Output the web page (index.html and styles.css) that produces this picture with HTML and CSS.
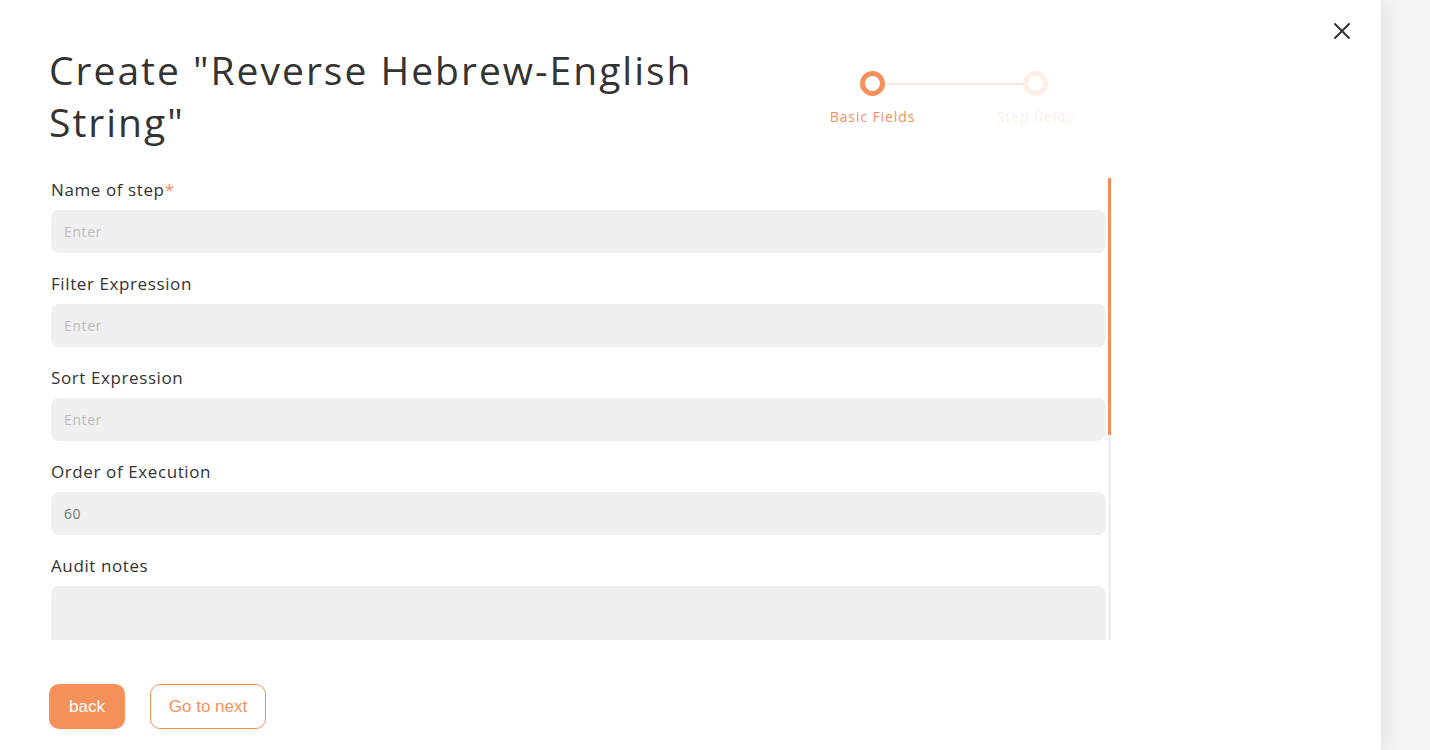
FILE: index.html
```html
<!DOCTYPE html>
<html lang="en">
<head>
<meta charset="utf-8">
<title>Create step</title>
<link rel="stylesheet" href="styles.css">
</head>
<body>
<div class="modal">
  <button class="close" aria-label="Close">
    <svg width="18" height="18" viewBox="0 0 18 18"><path d="M2 2 L16 16 M16 2 L2 16" stroke="#333" stroke-width="2" fill="none" stroke-linecap="round"/></svg>
  </button>
  <div class="header">
    <h1 class="title">Create "Reverse Hebrew-English String"</h1>
    <div class="stepper">
      <div class="step active"><span class="dot"></span><span class="step-label">Basic Fields</span></div>
      <div class="connector"></div>
      <div class="step"><span class="dot"></span><span class="step-label">Step fields</span></div>
    </div>
  </div>
  <div class="form-area">
    <div class="form-scroll">
      <div class="field">
        <label class="label">Name of step<span class="req">*</span></label>
        <input class="input" placeholder="Enter">
      </div>
      <div class="field">
        <label class="label">Filter Expression</label>
        <input class="input" placeholder="Enter">
      </div>
      <div class="field">
        <label class="label">Sort Expression</label>
        <input class="input" placeholder="Enter">
      </div>
      <div class="field">
        <label class="label">Order of Execution</label>
        <input class="input" value="60">
      </div>
      <div class="field">
        <label class="label">Audit notes</label>
        <textarea class="input textarea"></textarea>
      </div>
    </div>
    <div class="scrollbar"><div class="thumb"></div></div>
  </div>
  <div class="actions">
    <button class="btn btn-primary">back</button>
    <button class="btn btn-outline">Go to next</button>
  </div>
</div>
</body>
</html>
```
FILE: styles.css
```css
* { box-sizing: border-box; }
html, body { margin: 0; padding: 0; }
body {
  background: #f5f5f5;
  font-family: "Open Sans", "Noto Sans", sans-serif;
  color: #333;
  width: 1430px;
  height: 750px;
  overflow: hidden;
}
.modal {
  position: relative;
  width: 1381px;
  height: 750px;
  background: #fff;
  box-shadow: 0 0 22px rgba(0,0,0,0.12);
}
.close {
  position: absolute;
  left: 1333px;
  top: 22px;
  width: 18px;
  height: 18px;
  padding: 0;
  border: 0;
  background: none;
  display: flex;
}
.header {
  display: flex;
  align-items: flex-start;
  padding: 44px 0 0 49px;
  height: 178px;
}
.title {
  margin: 0;
  width: 700px;
  font-size: 39px;
  line-height: 52px;
  letter-spacing: 2px;
  font-weight: 400;
  color: #333;
}
.stepper {
  display: flex;
  align-items: flex-start;
  margin: 27px 0 0 111px;
}
.step {
  width: 25px;
  display: flex;
  flex-direction: column;
  align-items: center;
}
.dot {
  width: 25px;
  height: 25px;
  border-radius: 50%;
  border: 5px solid #fdeee6;
  background: #fff;
}
.step.active .dot { border-color: #f4905c; }
.step-label {
  margin-top: 11px;
  white-space: nowrap;
  font-size: 14px;
  line-height: 20px;
  letter-spacing: 0.9px;
  color: #fdeee6;
}
.step.active .step-label { color: #f4905c; }
.connector {
  width: 138px;
  height: 2px;
  margin-top: 11.5px;
  background: #fde8de;
}
.form-area {
  display: flex;
  margin-left: 51px;
  height: 462px;
}
.form-scroll {
  width: 1057px;
  height: 462px;
  overflow: hidden;
}
.scrollbar {
  width: 3px;
  height: 462px;
  background: #f0f0f0;
}
.thumb {
  height: 257px;
  background: #f68d5c;
}
.field {
  display: flex;
  flex-direction: column;
  padding-bottom: 19px;
}
.label {
  font-size: 17px;
  line-height: 24px;
  letter-spacing: 0.6px;
  margin-bottom: 8px;
  color: #333;
}
.req { color: #f4905c; }
.input {
  width: 1055px;
  height: 43px;
  border: 0;
  border-radius: 8px;
  background: #f0f0f0;
  padding: 0 13px;
  font-family: inherit;
  font-size: 14px;
  letter-spacing: 0.6px;
  color: #777;
  outline: none;
}
.input::placeholder { color: #bbb; }
.textarea {
  height: 330px;
  resize: none;
  padding-top: 12px;
}
.actions {
  display: flex;
  gap: 25px;
  padding: 44px 0 0 49px;
}
.btn {
  height: 45px;
  border-radius: 10px;
  font-family: "Liberation Sans", Arial, sans-serif;
  font-size: 17px;
  padding: 0;
}
.btn-primary {
  width: 76px;
  background: #f4915b;
  border: 0;
  color: #fff;
}
.btn-outline {
  width: 116px;
  background: #fff;
  border: 1px solid #f4915b;
  color: #f4915b;
}
```
